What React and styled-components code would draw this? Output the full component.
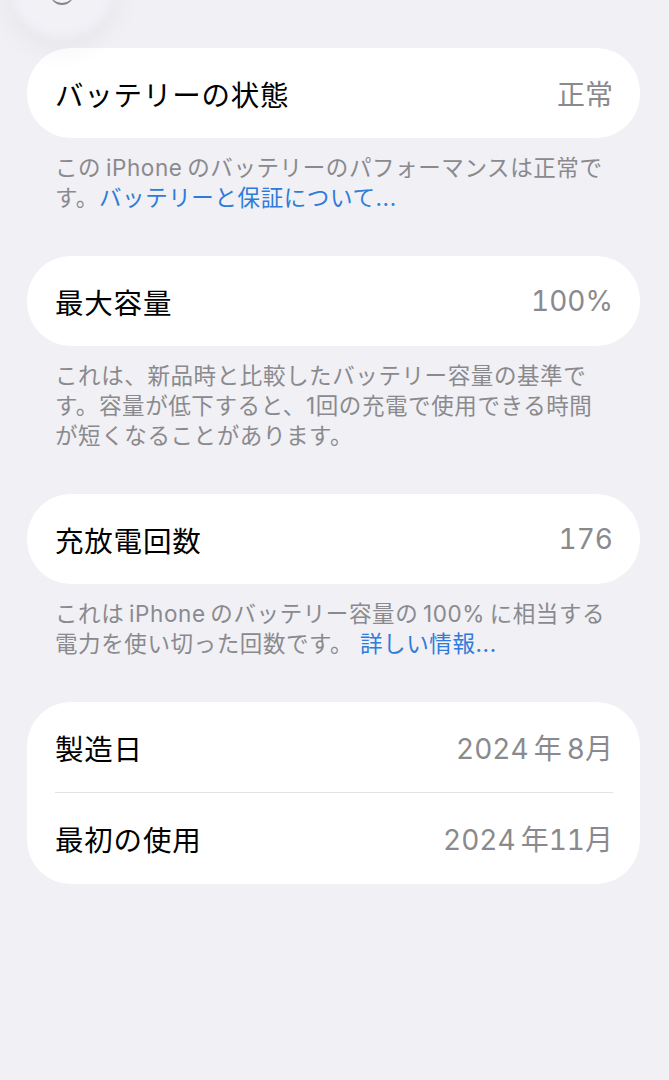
import styled, { createGlobalStyle } from "styled-components";

const GlobalStyle = createGlobalStyle`
  html, body {
    margin: 0;
    padding: 0;
    background: #f0f0f5;
  }
  body {
    font-family: Inter, "Noto Sans CJK JP", sans-serif;
    -webkit-font-smoothing: antialiased;
  }
`;

const Page = styled.div`
  position: relative;
  min-height: 1080px;
  padding: 48px 29px 0 27px;
  box-sizing: border-box;
  overflow: hidden;
  background: #f0f0f5;
`;

// floating glass back button, mostly scrolled off the top
const GlassButton = styled.div`
  position: absolute;
  left: 10px;
  top: -66px;
  width: 104px;
  height: 104px;
  border-radius: 50%;
  background: rgba(240, 240, 245, 0.95);
  box-shadow: 0 8px 30px rgba(0, 0, 0, 0.06);
  filter: blur(4px);
`;

const GlassGlyph = styled.div`
  position: absolute;
  left: 50px;
  top: -9px;
  width: 24px;
  height: 12px;
  border-bottom: 2px solid #6a6a70;
  border-radius: 0 0 12px 12px;
  opacity: 0.8;
`;

const Section = styled.section`
  margin-bottom: 43px;
`;

const Card = styled.div`
  background: #ffffff;
  border-radius: 44px;
  overflow: hidden;
`;

const Row = styled.div`
  height: 90px;
  display: flex;
  align-items: center;
  justify-content: space-between;
  padding: 0 27px 0 28px;
  position: relative;

  & + & {
    height: 92px;
  }
  & + &::before {
    content: "";
    position: absolute;
    top: 0;
    left: 28px;
    right: 27px;
    height: 1px;
    background: #e2e2e5;
  }
`;

const Label = styled.span`
  font-size: 28.5px;
  color: #000;
  letter-spacing: 0.8px;
`;

const Value = styled.span`
  font-size: 28px;
  color: #8a8a8e;
  font-variant-numeric: tabular-nums;
`;

const Footer = styled.p`
  margin: 0;
  padding: 15px 28px 0;
  font-size: 22.5px;
  line-height: 30px;
  color: #8a8a8e;
  letter-spacing: 0.6px;
`;

const Link = styled.span`
  color: #2f7bd9;
`;

const sections = [
  {
    rows: [{ label: "バッテリーの状態", value: "正常" }],
    footer: (
      <>
        この{"\u2009"}iPhone{"\u2009"}のバッテリーのパフォーマンスは正常で
        <br />
        す。<Link>バッテリーと保証について...</Link>
      </>
    ),
  },
  {
    rows: [{ label: "最大容量", value: "100%" }],
    footer: (
      <>
        これは、新品時と比較したバッテリー容量の基準で
        <br />
        す。容量が低下すると、1回の充電で使用できる時間
        <br />
        が短くなることがあります。
      </>
    ),
  },
  {
    rows: [{ label: "充放電回数", value: "176" }],
    footer: (
      <>
        これは{"\u2009"}iPhone{"\u2009"}のバッテリー容量の{"\u2009"}100%{"\u2009"}に相当する
        <br />
        電力を使い切った回数です。 <Link>詳しい情報...</Link>
      </>
    ),
  },
  {
    rows: [
      { label: "製造日", value: "2024\u2009年\u20098月" },
      { label: "最初の使用", value: "2024\u2009年11月" },
    ],
  },
];

const App = () => {
  return (
    <>
      <GlobalStyle />
      <Page>
        <GlassButton />
        <GlassGlyph />
        {sections.map((s, i) => (
          <Section key={i}>
            <Card>
              {s.rows.map((r) => (
                <Row key={r.label}>
                  <Label>{r.label}</Label>
                  <Value>{r.value}</Value>
                </Row>
              ))}
            </Card>
            {s.footer && <Footer>{s.footer}</Footer>}
          </Section>
        ))}
      </Page>
    </>
  );
};

export default App;
